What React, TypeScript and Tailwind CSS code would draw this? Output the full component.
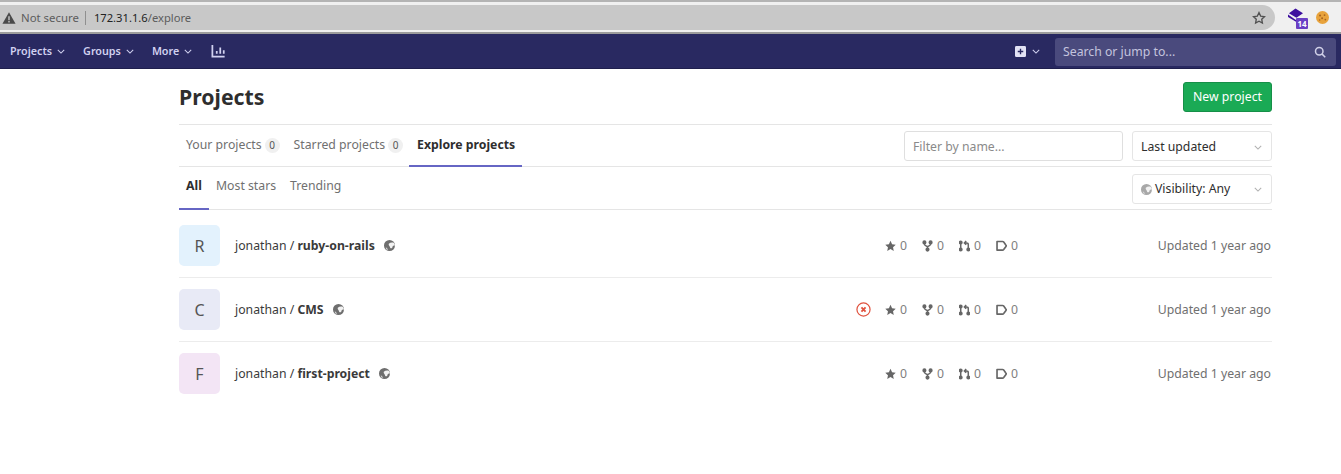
import React from "react";

const font = { fontFamily: '"Noto Sans", sans-serif' };

function Chevron({ className = "" }: { className?: string }) {
  return (
    <svg viewBox="0 0 10 6" className={className} fill="none" stroke="currentColor" strokeWidth="1.3">
      <path d="M1 1l4 4 4-4" />
    </svg>
  );
}

function Globe({ className = "", color = "#6e6e6e" }: { className?: string; color?: string }) {
  return (
    <svg viewBox="0 0 16 16" className={className}>
      <circle cx="8" cy="8" r="8" fill={color} />
      <path d="M7 5.500c2-1.800 5-2.200 7.600-1.200.8 1.300 1.300 2.500 1.300 3.900-1.400-.6-2.500-.2-3.200.8-.6 1-.4 2.400-1.700 3-1.300.5-2.200-.6-2.400-2-.2-1.200-2.500-2.500-1.600-4.500z" fill="#f2f2f2" />
      <path d="M2.500 11c1.200 0 2.200.8 2.600 2 .2.700.4 1.300.2 2.200-1.300-.6-2.300-2.400-2.800-4.200z" fill="#d8d8d8" />
    </svg>
  );
}

function Star() {
  return (
    <svg viewBox="0 0 16 16" className="w-[11px] h-[12px]" fill="#666">
      <path d="M8 .5l2.300 4.900 5.300.7-3.900 3.700 1 5.300L8 12.400l-4.700 2.700 1-5.300L.4 6.100l5.300-.7z" />
    </svg>
  );
}

function Fork() {
  return (
    <svg viewBox="0 0 16 16" className="w-[11px] h-[12px]" fill="none" stroke="#666" strokeWidth="2.200">
      <circle cx="3.500" cy="2.800" r="1.900" fill="#666" />
      <circle cx="12.500" cy="2.800" r="1.900" fill="#666" />
      <circle cx="8" cy="13.200" r="1.900" fill="#666" />
      <path d="M3.500 4v1.500c0 1.500 2 2.500 4.500 3.500 2.500-1 4.500-2 4.500-3.500V4M8 9v3" />
    </svg>
  );
}

function MergeReq() {
  return (
    <svg viewBox="0 0 16 16" className="w-[11px] h-[12px]" fill="none" stroke="#666" strokeWidth="2.200">
      <circle cx="2.500" cy="2.800" r="1.800" fill="#666" />
      <circle cx="2.500" cy="13.200" r="1.800" fill="#666" />
      <circle cx="13.500" cy="13.200" r="1.800" fill="#666" />
      <path d="M2.500 4v8M13.500 12V6c0-1.500-.8-2.500-2.500-2.500H8M10.500 .8L7.800 3.500l2.700 2.700" />
    </svg>
  );
}

function Issue() {
  return (
    <svg viewBox="0 0 16 16" className="w-[11px] h-[12px]" fill="none" stroke="#666" strokeWidth="2.400">
      <path d="M1.500 1.500h8c.8 0 1.300.3 1.700.8l3.300 4.500c.4.500.4 1.400 0 1.900l-3.300 4.500c-.4.500-.9.800-1.700.8h-8z" strokeLinejoin="round" />
    </svg>
  );
}

function Stat({ icon, w }: { icon: React.ReactNode; w: string }) {
  return (
    <span className={`flex items-center gap-[4px] text-[12.25px] leading-none text-[#808080] ${w}`}>
      {icon}
      <span className="pt-[1px]">0</span>
    </span>
  );
}

function Row({
  letter,
  bg,
  name,
  failed,
  last,
}: {
  letter: string;
  bg: string;
  name: string;
  failed?: boolean;
  last?: boolean;
}) {
  return (
    <div className={`flex items-center h-16 border-b ${last ? "border-transparent" : "border-[#ececec]"}`}>
      <div className={`w-[41px] h-[41px] rounded-[5px] flex items-center justify-center text-[16px] text-[#555] ${bg}`}>
        {letter}
      </div>
      <div className="ml-[15px] flex items-center text-[12.25px] text-[#3a3a3a]">
        <span className="pt-[1px]">jonathan /&nbsp;</span>
        <span className="font-bold pt-[1px]">{name}</span>
        <Globe className="w-[11px] h-[11px] ml-[9px]" />
      </div>
      <div className="ml-auto flex items-center">
        {failed && (
          <svg viewBox="0 0 16 16" className="w-[15px] h-[15px] mr-[14px]" fill="none" stroke="#e0533f" strokeWidth="1.300">
            <circle cx="8" cy="8" r="7" />
            <path d="M5.800 5.800l4.400 4.400M10.200 5.800l-4.400 4.400" strokeWidth="2" />
          </svg>
        )}
        <div className="flex items-center w-[134px]">
          <Stat icon={<Star />} w="w-[37px]" />
          <Stat icon={<Fork />} w="w-[37px]" />
          <Stat icon={<MergeReq />} w="w-[37px]" />
          <Stat icon={<Issue />} w="w-[23px]" />
        </div>
        <div className="w-[253px] text-right text-[12.25px] text-[#707070] pr-[1px] pt-[1px]">Updated 1 year ago</div>
      </div>
    </div>
  );
}

export default function App() {
  return (
    <div className="w-[1341px] h-[474px] overflow-hidden bg-white" style={font}>
      <div className="h-[34px] bg-[#f0f0f0] border-t-2 border-t-[#b4b4b4] border-b-2 border-b-[#9c9c9c] flex items-center pt-[1px]">
        <div className="w-[1275px] h-[25px] bg-[#c8c8c8] rounded-r-[13px] flex items-center pl-[2px] pr-[9px]">
          <svg viewBox="0 0 16 16" className="w-[14px] h-[14px]" fill="#4a4a4a">
            <path d="M8 1.500L15.500 14.500H.5zM7.200 6v4.500h1.600V6zm0 5.500v1.500h1.600v-1.500z" fillRule="evenodd" />
          </svg>
          <span className="ml-[5px] text-[11.4px] text-[#5c5c5c] pt-[1px]">Not secure</span>
          <span className="ml-[6px] w-px h-[14px] bg-[#8f8f8f]" />
          <span className="ml-[8px] text-[11.2px] text-[#222] pt-[1px]">172.31.1.6</span>
          <span className="text-[11.2px] text-[#5c5c5c] pt-[1px]">/explore</span>
          <svg viewBox="0 0 16 16" className="w-[14px] h-[14px] ml-auto mt-[1px]" fill="none" stroke="#505050" strokeWidth="1.500">
            <path d="M8 1.800l1.900 4 4.400.6-3.200 3 .8 4.400L8 11.700l-3.900 2.100.8-4.400-3.200-3 4.400-.6z" />
          </svg>
        </div>
        <div className="relative ml-[12px] w-[20px] h-[20px]">
          <svg viewBox="0 0 18 16" className="w-[17px] h-[15px]" fill="#3d0f9e">
            <path d="M9 .5l8 5-7 5-8-5zM1 7l8 5.500 1 .5v2L1 9.500z" />
          </svg>
          <span className="absolute right-[-1px] bottom-[-1px] w-[12px] h-[11px] bg-[#6a3fc4] rounded-[1px] text-white text-[8px] leading-[11px] text-center font-bold">
            14
          </span>
        </div>
        <svg viewBox="0 0 16 16" className="ml-[9px] w-[13px] h-[13px]">
          <circle cx="8" cy="8" r="8" fill="#e8a33c" />
          <circle cx="5" cy="5.500" r="1.300" fill="#a8621e" />
          <circle cx="10.500" cy="5" r="1.100" fill="#a8621e" />
          <circle cx="7.500" cy="9" r="1.200" fill="#a8621e" />
          <circle cx="11.500" cy="10.500" r="1.100" fill="#a8621e" />
          <circle cx="4.500" cy="11" r="1" fill="#a8621e" />
        </svg>
      </div>

      <nav className="h-[35px] bg-[#292961] flex items-center text-[#d1d1f0] text-[10.75px] font-semibold pl-[10px] border-b border-[#1f1f4d]">
        <span className="flex items-center gap-[5px]">Projects<Chevron className="w-[8px] h-[5px]" /></span>
        <span className="flex items-center gap-[5px] ml-[18px]">Groups<Chevron className="w-[8px] h-[5px]" /></span>
        <span className="flex items-center gap-[5px] ml-[18px]">More<Chevron className="w-[8px] h-[5px]" /></span>
        <svg viewBox="0 0 16 16" className="w-[15px] h-[14px] ml-[19px]" fill="none" stroke="#d1d1f0" strokeWidth="2">
          <path d="M1 1v13.500h14M6 8v3M10 4v7M14 7v4" />
        </svg>
        <div className="ml-auto flex items-center">
          <svg viewBox="0 0 16 16" className="w-[11px] h-[11px]">
            <path d="M2 0h12a2 2 0 012 2v12a2 2 0 01-2 2H2a2 2 0 01-2-2V2a2 2 0 012-2zm5 4v3H4v2h3v3h2V9h3V7H9V4z" fill="#e2e2f4" fillRule="evenodd" />
          </svg>
          <Chevron className="w-[8px] h-[5px] ml-[6px]" />
          <div className="ml-[15px] mr-[5px] mt-[1px] w-[281px] h-[28px] bg-[#4a4a7d] rounded-[3px] flex items-center justify-between pl-[8px] pr-[10px] text-[12.25px] font-normal text-[#c4c4de]">
            <span className="pt-[2px]">Search or jump to...</span>
            <svg viewBox="0 0 16 16" className="w-[12px] h-[12px]" fill="none" stroke="#d1d1e8" strokeWidth="2">
              <circle cx="7" cy="7" r="5" />
              <path d="M10.500 10.500L15 15" />
            </svg>
          </div>
        </div>
      </nav>

      <main className="ml-[179px] w-[1093px]">
        <div className="h-[56px] flex items-center justify-between border-b border-[#e5e5e5]">
          <h1 className="text-[21.25px] font-bold text-[#2e2e2e] leading-none">Projects</h1>
          <button className="w-[89px] h-[30px] rounded-[3px] bg-[#1aaa55] border border-[#168f48] text-white text-[12.25px] pt-[2px]">
            New project
          </button>
        </div>

        <div className="h-[42px] flex items-stretch border-b border-[#e5e5e5] text-[12.25px]">
          <div className="flex items-center pl-[7px] text-[#707070]">
            Your projects
            <span className="ml-[3px] w-[15px] h-[15px] rounded-full bg-[#f0f0f0] text-[10px] flex items-center justify-center text-[#555]">0</span>
          </div>
          <div className="flex items-center ml-[14px] text-[#707070]">
            Starred projects
            <span className="ml-[3px] w-[15px] h-[15px] rounded-full bg-[#f0f0f0] text-[10px] flex items-center justify-center text-[#555]">0</span>
          </div>
          <div className="flex items-center ml-[6px] pl-[8px] w-[113px] whitespace-nowrap border-b-2 border-[#6666c4] font-bold text-[#2e2e2e] -mb-px">
            Explore projects
          </div>
          <div className="ml-auto flex items-center">
            <div className="w-[219px] h-[30px] border border-[#dfdfdf] rounded-[3px] flex items-center pl-[8px] pt-[4px] text-[#8a8a8a]">
              Filter by name...
            </div>
            <div className="ml-[9px] w-[140px] h-[30px] border border-[#e5e5e5] rounded-[3px] flex items-center justify-between pl-[8px] pr-[9px] pt-[4px] text-[#2e2e2e]">
              Last updated
              <Chevron className="w-[8px] h-[5px] text-[#b0b0b0]" />
            </div>
          </div>
        </div>

        <div className="h-[43px] flex items-stretch border-b border-[#e5e5e5] text-[12.25px]">
          <div className="w-[30px] flex items-center justify-center border-b-2 border-[#6666c4] font-bold text-[#2e2e2e] -mb-px pb-[3px]">
            All
          </div>
          <div className="flex items-center ml-[7px] text-[#707070] pb-[3px]">Most stars</div>
          <div className="flex items-center ml-[14px] text-[#707070] pb-[3px]">Trending</div>
          <div className="ml-auto flex items-center pt-[2px]">
            <div className="w-[140px] h-[30px] border border-[#e5e5e5] rounded-[3px] flex items-center justify-between pl-[8px] pr-[9px] text-[#2e2e2e]">
              <span className="flex items-center gap-[3px]">
                <Globe className="w-[11px] h-[11px]" color="#a8a8a8" />
                Visibility: Any
              </span>
              <Chevron className="w-[8px] h-[5px] text-[#b0b0b0]" />
            </div>
          </div>
        </div>

        <div className="mt-[4px]">
          <Row letter="R" bg="bg-[#e3f2fd]" name="ruby-on-rails" />
          <Row letter="C" bg="bg-[#e8eaf6]" name="CMS" failed />
          <Row letter="F" bg="bg-[#f3e5f5]" name="first-project" last />
        </div>
      </main>
    </div>
  );
}
